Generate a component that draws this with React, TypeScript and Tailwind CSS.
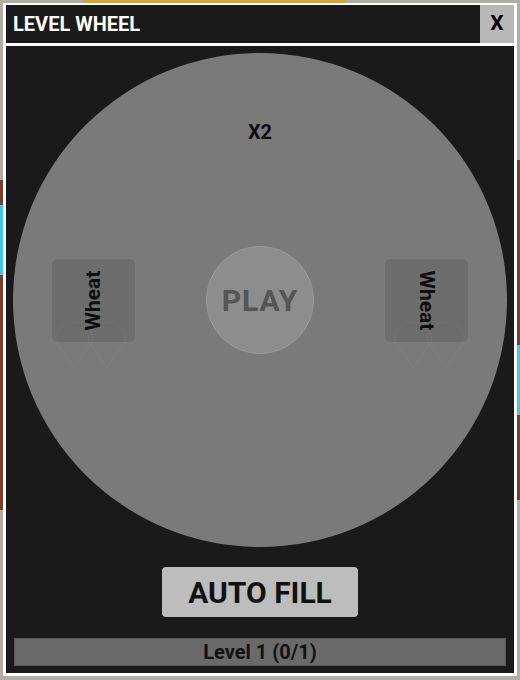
import React from "react";

const font = { fontFamily: "Roboto, 'Liberation Sans', sans-serif" };

// faint pin outlines that sit under the wheat tiles
function Ghosts({ flip }: { flip?: boolean }) {
    return (
        <svg
            width="83"
            height="110"
            viewBox="0 0 83 110"
            className={flip ? "absolute left-0 top-0 -scale-x-100 pointer-events-none" : "absolute left-0 top-0 pointer-events-none"}
        >
            <g fill="none" stroke="rgba(255,255,255,0.035)" strokeWidth="1.2">
                <path d="M3 82 A19 19 0 0 1 41 82 L22 108 Z" />
                <path d="M36 82 A19 19 0 0 1 74 82 L55 108 Z" />
            </g>
        </svg>
    );
}

function WheatTile({ side }: { side: "left" | "right" }) {
    return (
        <div className="relative w-[83px] h-[83px] rounded-[6px] bg-[#6d6d6d] flex items-center justify-center">
            <Ghosts flip={side === "right"} />
            <span
                className={
                    side === "left"
                        ? "-rotate-90 text-[21px] font-bold text-[#0d0d0d] leading-none"
                        : "rotate-90 text-[21px] font-bold text-[#0d0d0d] leading-none"
                }
            >
                Wheat
            </span>
        </div>
    );
}

export default function App() {
    return (
        <div className="relative w-[520px] h-[680px] bg-[#b1aca4] pt-[3px] pl-[3px] overflow-hidden" style={font}>
            {/* scene behind the dialog */}
            <div className="absolute top-0 left-[83px] w-[262px] h-[3px] bg-[#d6a633]" />
            <div className="absolute top-[180px] left-0 w-[3px] h-[330px] bg-[#7a3f2c]" />
            <div className="absolute top-[205px] left-0 w-[3px] h-[70px] bg-[#45c8dc]" />
            <div className="absolute top-[160px] right-0 w-[3px] h-[340px] bg-[#7a3f2c]" />
            <div className="absolute top-[345px] right-0 w-[3px] h-[70px] bg-[#45c8dc]" />

            {/* Dialog */}
            <div className="relative w-[514px] h-[673px] bg-white pt-[2px] px-[3px] pb-[3px] flex flex-col gap-[3px]">
                {/* Title bar */}
                <div className="h-[38px] flex bg-[#1a1a1a]">
                    <div className="flex-1 flex items-center pl-[7px] text-[20px] font-bold text-white">
                        LEVEL WHEEL
                    </div>
                    <button className="w-[34px] h-full bg-[#b7b7b7] flex items-center justify-center text-[21px] font-bold text-black">
                        X
                    </button>
                </div>

                {/* Body */}
                <div className="flex-1 bg-[#1a1a1a] flex flex-col items-center pt-[7px]">
                    {/* Wheel */}
                    <div className="relative w-[494px] h-[494px] rounded-full bg-[#7a7a7a] flex items-center justify-between px-[39px]">
                        <div className="absolute left-0 right-0 top-[67px] text-center text-[20px] font-bold text-[#0d0d0d] leading-[24px]">
                            X2
                        </div>
                        <WheatTile side="left" />
                        <button className="w-[108px] h-[108px] rounded-full bg-[#8d8d8d] border border-[#9d9d9d] flex items-center justify-center text-[30px] font-bold tracking-[1px] text-[#555555]">
                            PLAY
                        </button>
                        <WheatTile side="right" />
                    </div>

                    {/* Auto fill */}
                    <button className="mt-[20px] w-[196px] h-[50px] rounded-[4px] bg-[#bdbdbd] flex items-center justify-center text-[30px] font-bold text-[#111111]">
                        AUTO FILL
                    </button>

                    {/* Level progress */}
                    <div className="mt-[21px] w-[492px] h-[28px] bg-[#6a6a6a] border border-[#565656] flex items-center justify-center text-[20px] font-bold text-[#111111]">
                        Level 1 (0/1)
                    </div>
                </div>
            </div>
        </div>
    );
}
